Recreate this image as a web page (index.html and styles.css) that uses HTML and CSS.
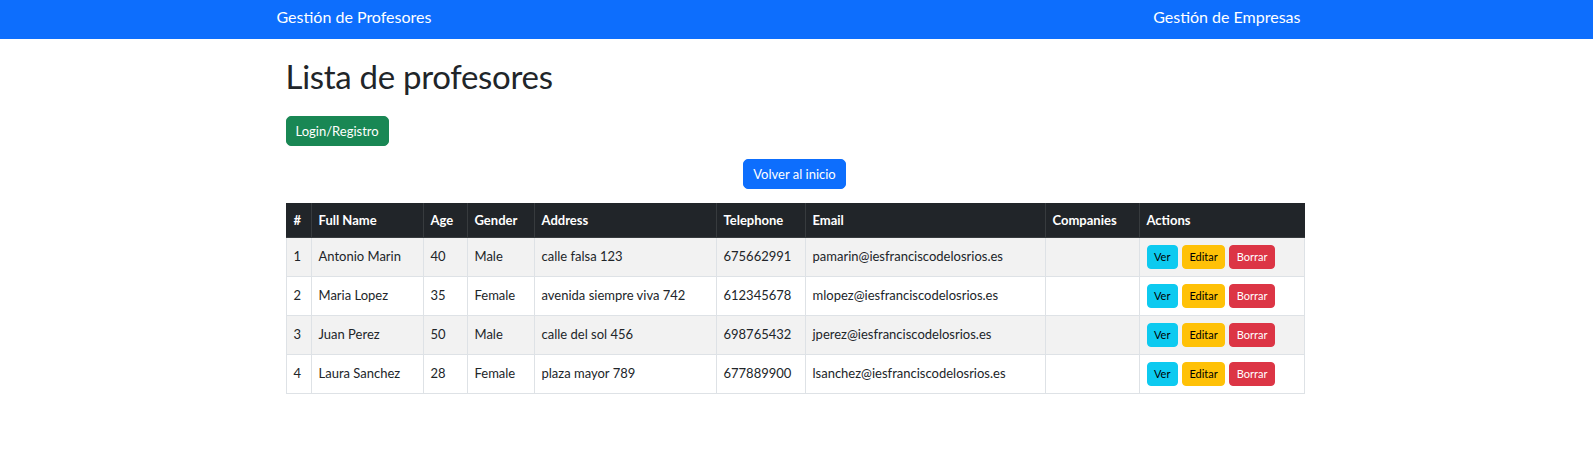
FILE: index.html
```html
<!DOCTYPE html>
<html lang="es">
<head>
<meta charset="utf-8">
<title>Lista de profesores</title>
<link rel="stylesheet" href="styles.css">
</head>
<body>
<nav class="navbar">
  <div class="nav-inner">
    <a class="nav-link" href="#">Gestión de Profesores</a>
    <a class="nav-link" href="#">Gestión de Empresas</a>
  </div>
</nav>
<main class="container">
  <h1 class="title">Lista de profesores</h1>
  <div class="login-row">
    <a class="btn btn-success" href="#">Login/Registro</a>
  </div>
  <div class="center-row">
    <a class="btn btn-primary" href="#">Volver al inicio</a>
  </div>
  <table class="table">
    <colgroup>
      <col class="c-num"><col class="c-name"><col class="c-age"><col class="c-gender"><col class="c-address"><col class="c-tel"><col class="c-email"><col class="c-comp"><col class="c-actions">
    </colgroup>
    <thead>
      <tr>
        <th>#</th><th>Full Name</th><th>Age</th><th>Gender</th><th>Address</th><th>Telephone</th><th>Email</th><th>Companies</th><th>Actions</th>
      </tr>
    </thead>
    <tbody>
      <tr>
        <td>1</td><td>Antonio Marin</td><td>40</td><td>Male</td><td>calle falsa 123</td><td>675662991</td><td>pamarin@iesfranciscodelosrios.es</td><td></td>
        <td><span class="actions"><a class="sbtn sbtn-info" href="#">Ver</a><a class="sbtn sbtn-warning" href="#">Editar</a><a class="sbtn sbtn-danger" href="#">Borrar</a></span></td>
      </tr>
      <tr>
        <td>2</td><td>Maria Lopez</td><td>35</td><td>Female</td><td>avenida siempre viva 742</td><td>612345678</td><td>mlopez@iesfranciscodelosrios.es</td><td></td>
        <td><span class="actions"><a class="sbtn sbtn-info" href="#">Ver</a><a class="sbtn sbtn-warning" href="#">Editar</a><a class="sbtn sbtn-danger" href="#">Borrar</a></span></td>
      </tr>
      <tr>
        <td>3</td><td>Juan Perez</td><td>50</td><td>Male</td><td>calle del sol 456</td><td>698765432</td><td>jperez@iesfranciscodelosrios.es</td><td></td>
        <td><span class="actions"><a class="sbtn sbtn-info" href="#">Ver</a><a class="sbtn sbtn-warning" href="#">Editar</a><a class="sbtn sbtn-danger" href="#">Borrar</a></span></td>
      </tr>
      <tr>
        <td>4</td><td>Laura Sanchez</td><td>28</td><td>Female</td><td>plaza mayor 789</td><td>677889900</td><td>lsanchez@iesfranciscodelosrios.es</td><td></td>
        <td><span class="actions"><a class="sbtn sbtn-info" href="#">Ver</a><a class="sbtn sbtn-warning" href="#">Editar</a><a class="sbtn sbtn-danger" href="#">Borrar</a></span></td>
      </tr>
    </tbody>
  </table>
</main>
</body>
</html>
```
FILE: styles.css
```css
* { box-sizing: border-box; }

body {
  margin: 0;
  font-family: "Lato", "Segoe UI", "Liberation Sans", sans-serif;
  color: #212529;
  background: #fff;
}

a { text-decoration: none; }

.navbar {
  background: #0d6efd;
  height: 39px;
}

.nav-inner {
  width: 1024px;
  margin-left: calc(50% - 520px);
  display: flex;
  justify-content: space-between;
  padding-top: 5px;
}

.nav-link {
  color: #fff;
  font-size: 16px;
  line-height: 24px;
}

.container {
  width: 1018px;
  margin-left: calc(50% - 511px);
}

.title {
  font-size: 33px;
  font-weight: 400;
  line-height: 1.2;
  letter-spacing: -0.3px;
  margin: 18px 0 0;
}

.login-row {
  margin-top: 19px;
  display: flex;
}

.center-row {
  margin-top: 13px;
  display: flex;
  justify-content: center;
}

.btn {
  display: inline-block;
  font-size: 13px;
  line-height: 18px;
  padding: 5px 9px;
  border: 1px solid transparent;
  border-radius: 5px;
  color: #fff;
}

.btn-success { background: #198754; border-color: #198754; }
.btn-primary { background: #0d6efd; border-color: #0d6efd; }

.table {
  margin-top: 14px;
  width: 1018px;
  table-layout: fixed;
  border-collapse: collapse;
  font-size: 13px;
  line-height: 1.5;
}

.c-num { width: 25px; }
.c-name { width: 112px; }
.c-age { width: 44px; }
.c-gender { width: 67px; }
.c-address { width: 182px; }
.c-tel { width: 89px; }
.c-email { width: 240px; }
.c-comp { width: 94px; }
.c-actions { width: 165px; }

.table th,
.table td {
  padding: 7px 7px;
  text-align: left;
  vertical-align: baseline;
  border: 1px solid #dee2e6;
  white-space: nowrap;
}

.table thead th {
  background: #212529;
  color: #fff;
  font-weight: 700;
  border-color: #373b3e;
  border-top-color: #212529;
}

.table thead th:first-child { border-left-color: #212529; }
.table thead th:last-child { border-right-color: #212529; }
.table thead tr { border-bottom: 1px solid #212529; }

.table tbody tr:nth-child(odd) td { background: #f2f2f2; }

.actions {
  display: inline-flex;
  gap: 4px;
  align-items: baseline;
}

.sbtn {
  display: inline-block;
  font-size: 11px;
  line-height: 16px;
  padding: 3px 6.5px;
  border: 1px solid transparent;
  border-radius: 4px;
}

.sbtn-info { background: #0dcaf0; border-color: #0dcaf0; color: #000; }
.sbtn-warning { background: #ffc107; border-color: #ffc107; color: #000; }
.sbtn-danger { background: #dc3545; border-color: #dc3545; color: #fff; }
```
